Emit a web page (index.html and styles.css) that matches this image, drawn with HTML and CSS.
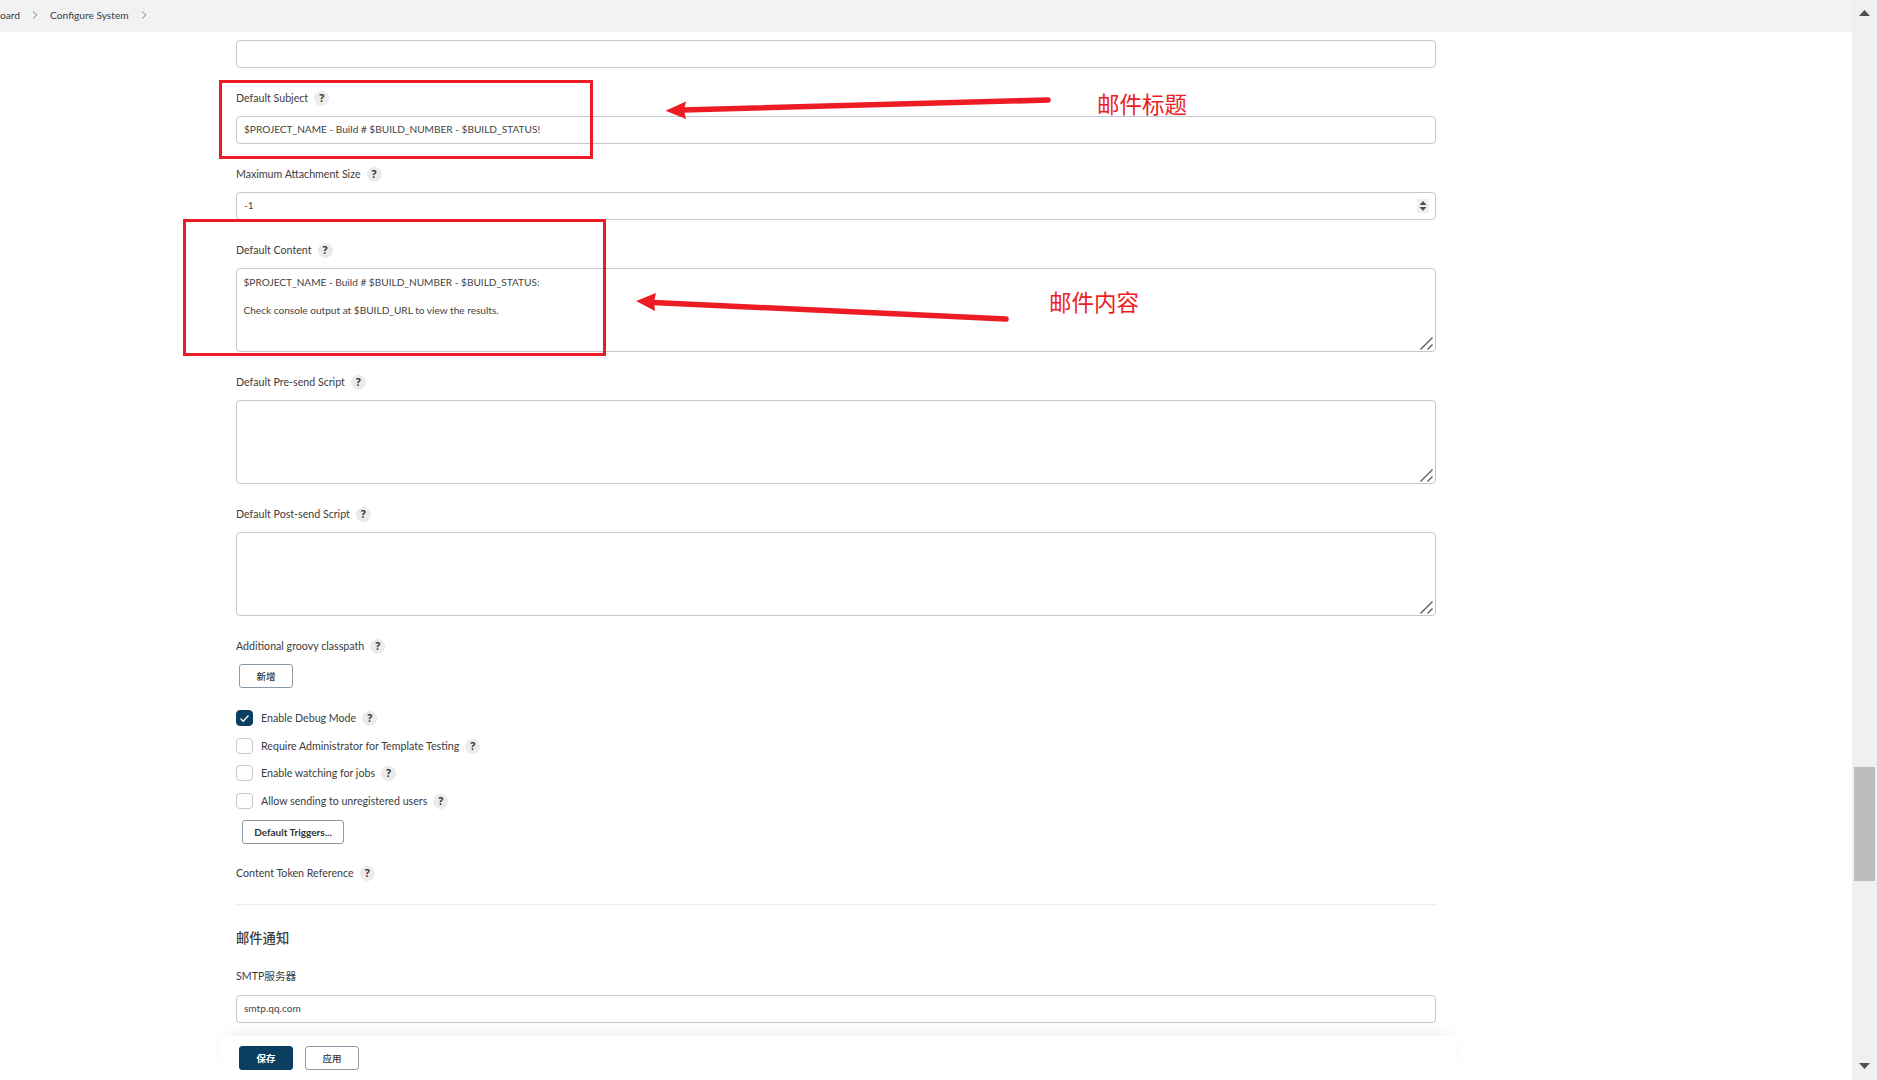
FILE: index.html
```html
<!DOCTYPE html>
<html lang="zh-CN">
<head>
<meta charset="utf-8">
<title>Configure System</title>
<link rel="stylesheet" href="styles.css">
</head>
<body>
<div class="page">
  <div class="main">
    <nav class="crumbs">
      <span>oard</span>
      <svg class="chev" width="6" height="8" viewBox="0 0 6 8"><path d="M1 .5 5 4 1 7.5" fill="none" stroke="#8a8a8a"/></svg>
      <span class="crumb-current">Configure System</span>
      <svg class="chev" width="6" height="8" viewBox="0 0 6 8"><path d="M1 .5 5 4 1 7.5" fill="none" stroke="#8a8a8a"/></svg>
    </nav>
    <div class="content">
      <form class="form">
        <input class="control" type="text" value="">

        <div class="label"><span>Default Subject</span><i class="help">?</i></div>
        <input class="control" type="text" value="$PROJECT_NAME - Build # $BUILD_NUMBER - $BUILD_STATUS!">

        <div class="label"><span>Maximum Attachment Size</span><i class="help">?</i></div>
        <div class="wrap">
          <input class="control" type="text" value="-1">
          <svg class="spinner" width="12" height="14" viewBox="0 0 12 14"><rect width="12" height="14" fill="#f0f0f0"/><path d="M6 2 9.500 6h-7zM6 12 2.500 8h7z" fill="#505050"/></svg>
        </div>

        <div class="label"><span>Default Content</span><i class="help">?</i></div>
        <div class="wrap">
          <textarea class="control area">$PROJECT_NAME - Build # $BUILD_NUMBER - $BUILD_STATUS:

Check console output at $BUILD_URL to view the results.</textarea>
          <svg class="grip" width="13" height="13" viewBox="0 0 13 13"><path d="M.5 12.500 12.500.5M7.500 12.500l5-5" fill="none" stroke="#555" stroke-width="1.200"/></svg>
        </div>

        <div class="label"><span>Default Pre-send Script</span><i class="help">?</i></div>
        <div class="wrap">
          <textarea class="control area"></textarea>
          <svg class="grip" width="13" height="13" viewBox="0 0 13 13"><path d="M.5 12.500 12.500.5M7.500 12.500l5-5" fill="none" stroke="#555" stroke-width="1.200"/></svg>
        </div>

        <div class="label"><span>Default Post-send Script</span><i class="help">?</i></div>
        <div class="wrap">
          <textarea class="control area"></textarea>
          <svg class="grip" width="13" height="13" viewBox="0 0 13 13"><path d="M.5 12.500 12.500.5M7.500 12.500l5-5" fill="none" stroke="#555" stroke-width="1.200"/></svg>
        </div>

        <div class="label"><span>Additional groovy classpath</span><i class="help">?</i></div>
        <button class="btn btn-add" type="button">新增</button>

        <div class="checks">
          <div class="check"><b class="box box-on"><svg width="11" height="9" viewBox="0 0 11 9"><path d="M1.500 4.500 4.200 7.200 9.500 1.500" fill="none" stroke="#fff" stroke-width="1.300"/></svg></b><span>Enable Debug Mode</span><i class="help">?</i></div>
          <div class="check"><b class="box"></b><span>Require Administrator for Template Testing</span><i class="help">?</i></div>
          <div class="check"><b class="box"></b><span>Enable watching for jobs</span><i class="help">?</i></div>
          <div class="check"><b class="box"></b><span>Allow sending to unregistered users</span><i class="help">?</i></div>
        </div>
        <button class="btn btn-triggers" type="button">Default Triggers...</button>

        <div class="label label-token"><span>Content Token Reference</span><i class="help">?</i></div>
        <hr class="rule">
        <h3 class="section">邮件通知</h3>
        <div class="label label-smtp"><span>SMTP服务器</span></div>
        <input class="control" type="text" value="smtp.qq.com">
      </form>
    </div>
    <footer class="footer">
      <button class="btn btn-primary" type="button">保存</button>
      <button class="btn" type="button">应用</button>
    </footer>
  </div>
  <aside class="scrollbar">
    <svg class="arrow" width="11" height="6" viewBox="0 0 11 6"><path d="M5.500 0 11 6H0z" fill="#505050"/></svg>
    <div class="thumb"></div>
    <svg class="arrow arrow-down" width="11" height="6" viewBox="0 0 11 6"><path d="M0 0h11L5.500 6z" fill="#505050"/></svg>
  </aside>
</div>

<div class="mark mark-subject"></div>
<div class="mark mark-content"></div>
<svg class="arrows" width="1877" height="1080" viewBox="0 0 1877 1080">
  <path d="M1048 100 682 110" fill="none" stroke="#ed1c24" stroke-width="5.500" stroke-linecap="round"/>
  <path d="M665.500 110.700 686 101.500 684 110 686 119z" fill="#ed1c24"/>
  <path d="M1006 319 653 302.500" fill="none" stroke="#ed1c24" stroke-width="5.500" stroke-linecap="round"/>
  <path d="M636 301 656 293 654 302 655 311z" fill="#ed1c24"/>
</svg>
<div class="note note-subject">邮件标题</div>
<div class="note note-content">邮件内容</div>
</body>
</html>
```
FILE: styles.css
```css
* { box-sizing: border-box; }
html, body { margin: 0; height: 100%; overflow: hidden; background: #fff; }
body {
  font-family: Lato, "Noto Sans CJK SC", sans-serif;
  font-size: 10.650px;
  color: #3c3c3c;
}
.page { display: flex; width: 1877px; height: 1080px; }
.main { flex: 1; display: flex; flex-direction: column; min-width: 0; }

.crumbs {
  height: 32px;
  flex: none;
  background: #f2f2f2;
  display: flex;
  align-items: center;
  font-size: 10.200px;
  padding-bottom: 2px;
}
.chev { margin-left: 12px; }
.crumb-current { margin-left: 12px; }

.content { flex: 1; min-height: 0; overflow: hidden; padding: 8px 0 0 236px; }
.form { width: 1200px; }

.control {
  display: block;
  width: 100%;
  height: 28px;
  padding: 0 7px 2px;
  border: 1px solid #c0c9d1;
  border-radius: 4px;
  background: #fff;
  font: inherit;
  font-size: 10.100px;
  color: #444;
  outline: none;
}
.area {
  height: 84px;
  padding: 6px 6.500px;
  line-height: 14px;
  resize: none;
}
.wrap { position: relative; }
.spinner { position: absolute; top: 7px; right: 7px; }
.grip { position: absolute; right: 3px; bottom: 2px; }

.label {
  height: 36px;
  margin-top: 12px;
  padding-bottom: 2px;
  display: flex;
  align-items: center;
}
.help {
  width: 15px;
  height: 15px;
  margin-left: 6px;
  border-radius: 50%;
  background: #ebebeb;
  color: #333;
  font-family: "Noto Sans", sans-serif;
  font-style: normal;
  font-weight: 700;
  font-size: 10.500px;
  line-height: 15px;
  text-align: center;
}
.label .help { margin-top: 2px; }

.btn {
  display: block;
  height: 24px;
  width: 54px;
  padding: 0;
  border: 1px solid #8b9aa8;
  border-radius: 3px;
  background: #fff;
  color: #333;
  font: inherit;
  font-size: 9.500px;
  font-weight: 500;
}
.btn-add { margin-left: 3px; }
.btn-triggers { width: 102px; margin: -.68px 0 0 6px; font-size: 10px; font-weight: 700; }
.btn-primary { background: #0b3f62; border-color: #0b3f62; color: #fff; font-weight: 700; }

.checks { margin-top: 22px; }
.check { height: 27.670px; display: flex; align-items: flex-start; }
.check span { margin-left: 8px; line-height: 15px; }
.check .help { margin-top: 1px; }
.box {
  width: 17px;
  height: 16px;
  flex: none;
  border: 1px solid #c0c9d1;
  border-radius: 4px;
  background: #fff;
  display: flex;
  align-items: center;
  justify-content: center;
}
.box-on { background: #0b3f62; border-color: #0b3f62; }

.label-token { margin-top: 12px; }
.rule { height: 1px; margin: 12px 0 0; border: 0; background: #eeeeee; }
.section { margin: 23px 0 0; font-size: 13.300px; font-weight: 500; line-height: 20px; height: 20px; }
.label-smtp { margin-top: 11px; height: 36px; }

.footer {
  height: 44px;
  flex: none;
  width: 1235px;
  margin-left: 220px;
  padding: 10px 0 0 19px;
  display: flex;
  gap: 12px;
  background: #fff;
  position: relative;
  box-shadow: 0 -8px 16px -4px rgba(0, 0, 0, .05);
}

.scrollbar {
  width: 25px;
  flex: none;
  background: #f0f0f0;
  display: flex;
  flex-direction: column;
  align-items: center;
  padding-top: 10px;
}
.thumb { width: 21px; height: 114px; margin-top: 751px; background: #bdbdbd; }
.arrow { display: block; flex: none; }
.arrow-down { margin-top: 182px; }

.mark { position: absolute; border: 3px solid #ed1c24; }
.mark-subject { left: 219px; top: 80px; width: 374px; height: 79px; }
.mark-content { left: 183px; top: 219px; width: 423px; height: 137px; }
.arrows { position: absolute; left: 0; top: 0; pointer-events: none; }
.note {
  position: absolute;
  font-family: "Noto Sans CJK SC", sans-serif;
  font-size: 22.500px;
  line-height: 30px;
  color: #ed1c24;
  font-weight: 400;
}
.note-subject { left: 1097px; top: 88px; }
.note-content { left: 1049px; top: 286px; }
```
